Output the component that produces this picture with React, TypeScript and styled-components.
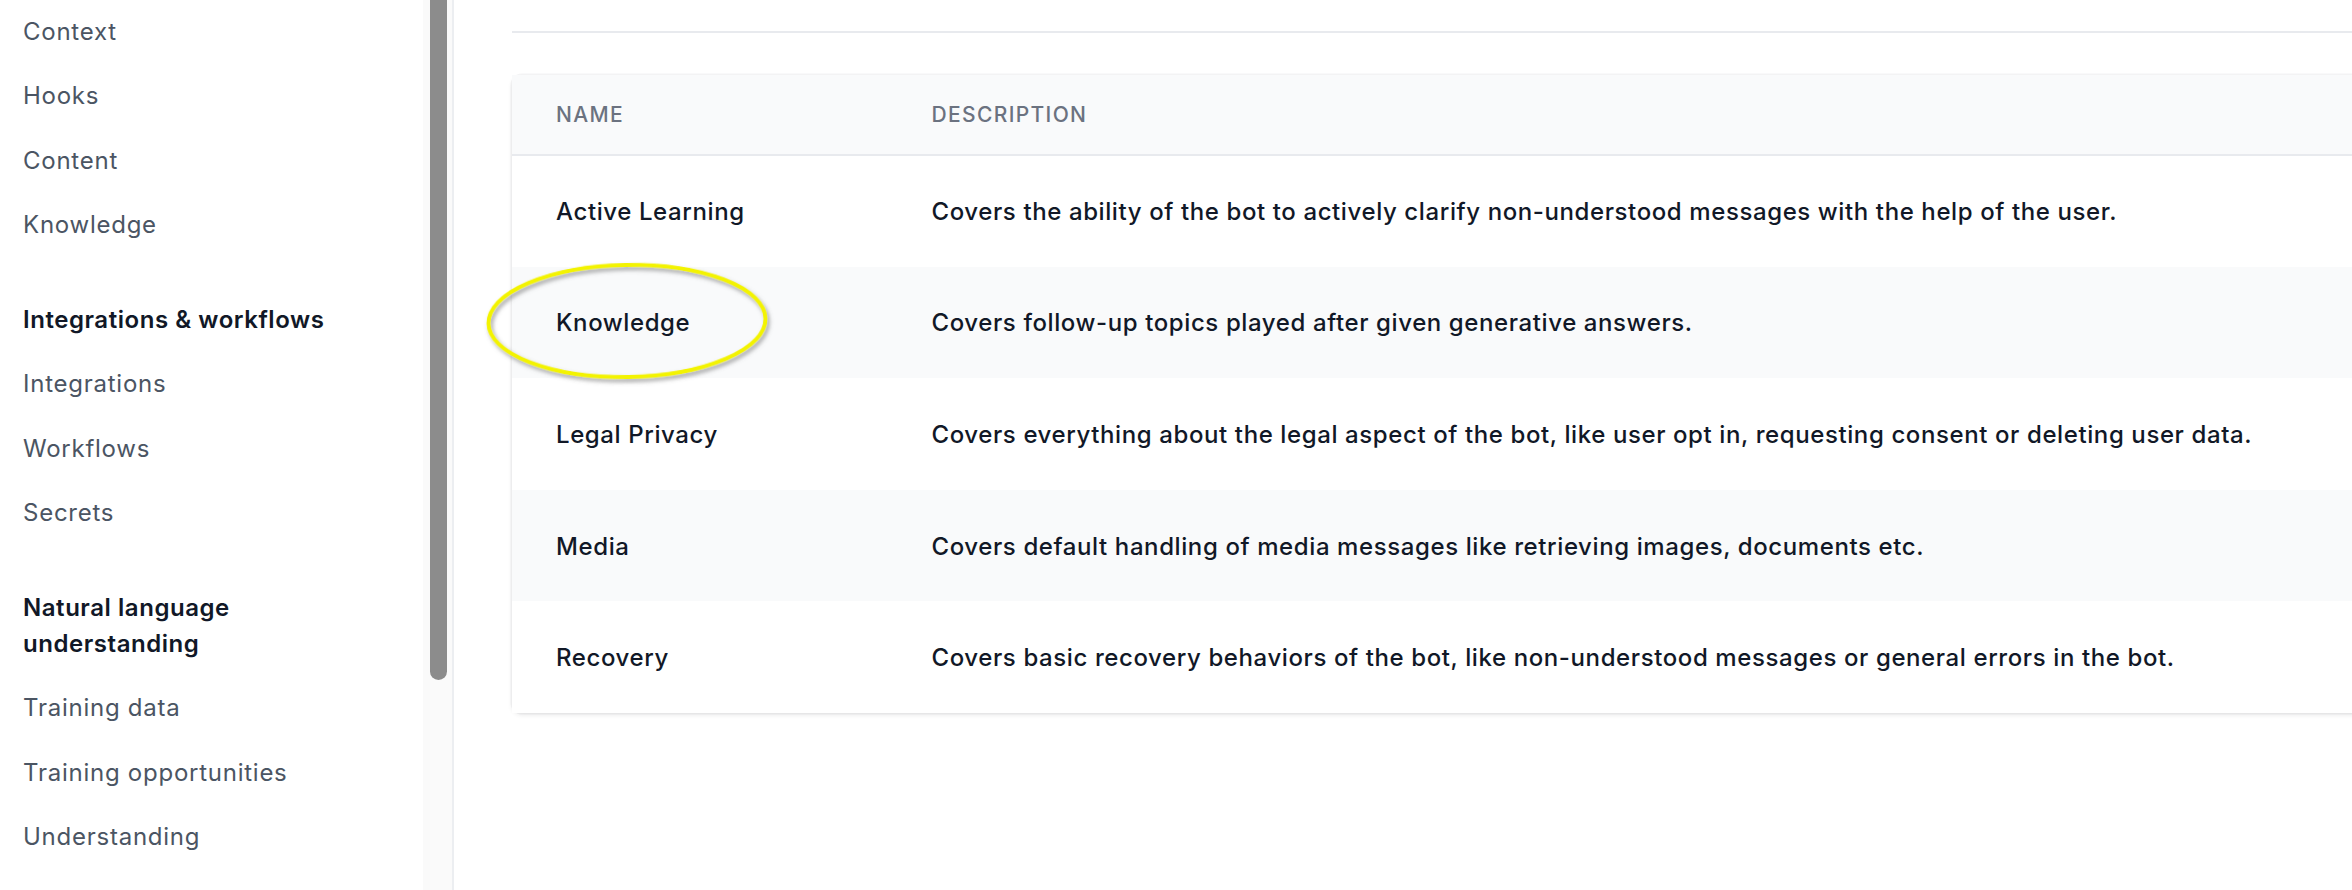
import React from "react";
import styled, { createGlobalStyle } from "styled-components";

const GlobalStyle = createGlobalStyle`
  html, body { margin: 0; padding: 0; background: #ffffff; }
  body { font-family: Inter, "Noto Sans", "Liberation Sans", sans-serif; -webkit-font-smoothing: antialiased; }
  * { box-sizing: border-box; }
`;

const Page = styled.div`
  display: flex;
  width: 2352px;
  height: 890px;
  overflow: hidden;
  background: #ffffff;
`;

const Sidebar = styled.aside`
  display: flex;
  flex: 0 0 454px;
  height: 100%;
  border-right: 2px solid #eceef1;
  overflow: hidden;
`;

const Nav = styled.nav`
  flex: 1;
  display: flex;
  flex-direction: column;
  padding-left: 23px;
  margin-top: -0.5px;
`;

const NavItem = styled.div`
  font-size: 24px;
  line-height: 36px;
  padding: 14.25px 0;
  color: #4b5563;
  font-weight: 400;
  letter-spacing: 0.75px;
  white-space: nowrap;
`;

const NavSection = styled.div`
  font-size: 24px;
  line-height: 36px;
  padding: 14.25px 0;
  margin-top: 30px;
  color: #111827;
  font-weight: 600;
  letter-spacing: 0.55px;
  width: 345px;
`;

const Track = styled.div`
  flex: 0 0 29px;
  display: flex;
  flex-direction: column;
  align-items: center;
  background: #fafafa;
  padding-left: 1px;
`;

const Thumb = styled.div`
  width: 17px;
  height: 700px;
  margin-top: -20px;
  background: #8c8c8c;
  border-radius: 9px;
`;

const Main = styled.main`
  flex: 1;
  min-width: 0;
  padding-left: 58px;
  overflow: hidden;
`;

const Divider = styled.div`
  margin-top: 31px;
  height: 2px;
  background: #e8eaee;
  width: 2000px;
`;

const Card = styled.div`
  margin-top: 42px;
  width: 2000px;
  background: #ffffff;
  border-radius: 10px 0 0 10px;
  box-shadow: 0 2px 5px rgba(0, 0, 0, 0.09), 0 0 0 1.5px rgba(17, 24, 39, 0.04);
`;

const Table = styled.table`
  width: 100%;
  border-collapse: collapse;
  border-spacing: 0;
`;

const HeadRow = styled.tr`
  height: 80px;
  background: #f9fafb;
  border-bottom: 2px solid #e8eaee;
`;

const HeadCell = styled.th<{ $first?: boolean }>`
  text-align: left;
  padding: 0;
  padding-left: ${(p) => (p.$first ? "44px" : "0")};
  width: ${(p) => (p.$first ? "419.5px" : "auto")};
  font-size: 21px;
  line-height: 30px;
  font-weight: 500;
  letter-spacing: 1.35px;
  text-transform: uppercase;
  color: #6b7280;
`;

const BodyRow = styled.tr<{ $striped: boolean }>`
  height: 111.6px;
  background: ${(p) => (p.$striped ? "#f9fafb" : "#ffffff")};
`;

const Cell = styled.td<{ $first?: boolean }>`
  position: relative;
  padding: 0;
  padding-left: ${(p) => (p.$first ? "44px" : "0")};
  padding-top: 2px;
  font-size: 24px;
  line-height: 36px;
  font-weight: 500;
  letter-spacing: 0.6px;
  color: #111827;
  white-space: nowrap;
`;

const Highlight = styled.svg`
  position: absolute;
  left: -27px;
  top: -10px;
  overflow: visible;
  pointer-events: none;
`;

const sections: { title?: string; items: string[] }[] = [
  { items: ["Context", "Hooks", "Content", "Knowledge"] },
  { title: "Integrations & workflows", items: ["Integrations", "Workflows", "Secrets"] },
  { title: "Natural language understanding", items: ["Training data", "Training opportunities", "Understanding"] },
];

const rows = [
  { name: "Active Learning", desc: "Covers the ability of the bot to actively clarify non-understood messages with the help of the user." },
  { name: "Knowledge", desc: "Covers follow-up topics played after given generative answers.", mark: true },
  { name: "Legal Privacy", desc: "Covers everything about the legal aspect of the bot, like user opt in, requesting consent or deleting user data." },
  { name: "Media", desc: "Covers default handling of media messages like retrieving images, documents etc." },
  { name: "Recovery", desc: "Covers basic recovery behaviors of the bot, like non-understood messages or general errors in the bot." },
];

function Ellipse() {
  return (
    <Highlight width="292" height="130" viewBox="0 0 292 130">
      <defs>
        <filter id="hlShadow" x="-10%" y="-20%" width="130%" height="150%">
          <feDropShadow dx="2" dy="3" stdDeviation="2" floodColor="#555" floodOpacity="0.55" />
        </filter>
      </defs>
      <ellipse
        cx="142"
        cy="64"
        rx="138.5"
        ry="56"
        fill="none"
        stroke="#f3f300"
        strokeWidth="4"
        filter="url(#hlShadow)"
        transform="rotate(-1 142 64)"
      />
    </Highlight>
  );
}

export default function App() {
  return (
    <>
      <GlobalStyle />
      <Page>
        <Sidebar>
          <Nav>
            {sections.map((s, i) => (
              <React.Fragment key={i}>
                {s.title && <NavSection>{s.title}</NavSection>}
                {s.items.map((it) => (
                  <NavItem key={it}>{it}</NavItem>
                ))}
              </React.Fragment>
            ))}
          </Nav>
          <Track>
            <Thumb />
          </Track>
        </Sidebar>
        <Main>
          <Divider />
          <Card>
            <Table>
              <thead>
                <HeadRow>
                  <HeadCell $first>Name</HeadCell>
                  <HeadCell>Description</HeadCell>
                </HeadRow>
              </thead>
              <tbody>
                {rows.map((r, i) => (
                  <BodyRow key={r.name} $striped={i % 2 === 1}>
                    <Cell $first>
                      {r.mark && <Ellipse />}
                      {r.name}
                    </Cell>
                    <Cell>{r.desc}</Cell>
                  </BodyRow>
                ))}
              </tbody>
            </Table>
          </Card>
        </Main>
      </Page>
    </>
  );
}
